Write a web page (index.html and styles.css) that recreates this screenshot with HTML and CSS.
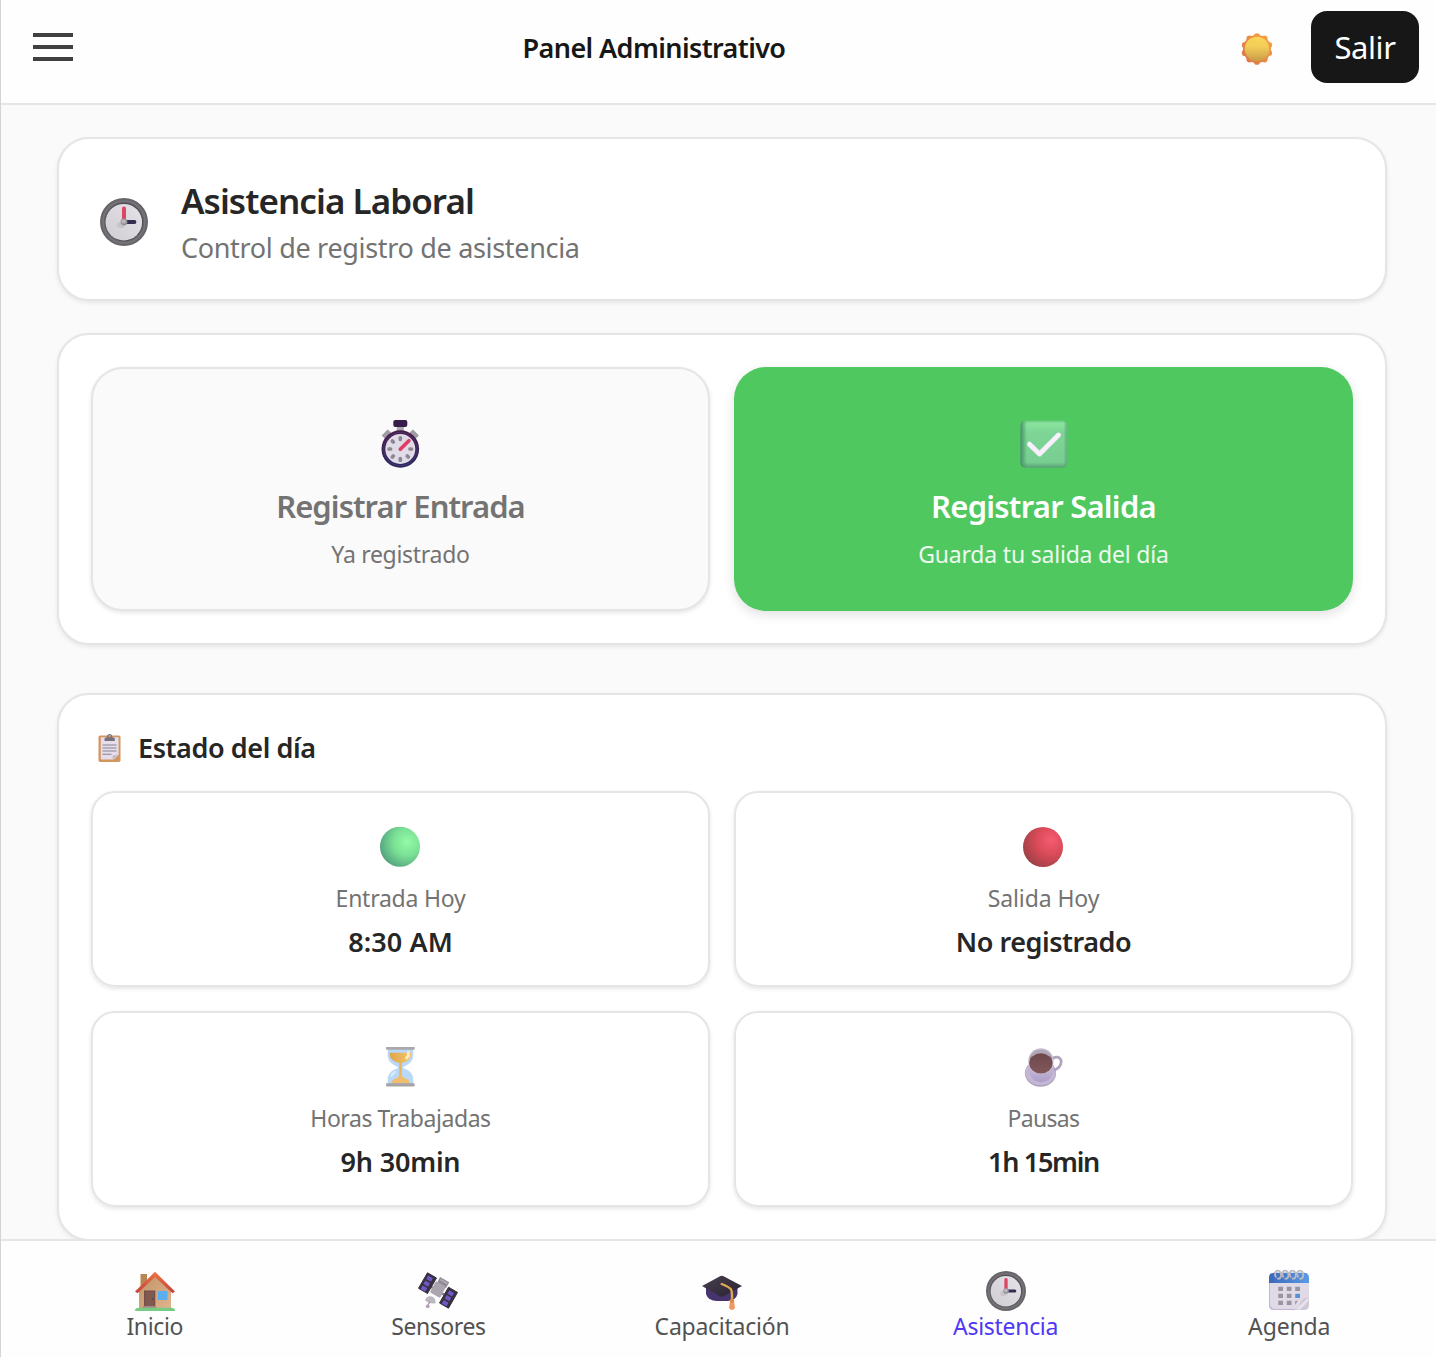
FILE: index.html
```html
<!DOCTYPE html>
<html lang="es">
<head>
<meta charset="utf-8">
<title>Panel Administrativo</title>
<link rel="stylesheet" href="styles.css">
</head>
<body>
<svg width="0" height="0" class="defs" aria-hidden="true">
  <defs>
    <linearGradient id="sunCore" x1="0" y1="0" x2="0" y2="1"><stop offset="0" stop-color="#f9d65a"/><stop offset=".4" stop-color="#f3cd57"/><stop offset="1" stop-color="#c99a48"/></linearGradient>
    <linearGradient id="sunRim" gradientUnits="userSpaceOnUse" x1="28" y1="4" x2="4" y2="28"><stop offset="0" stop-color="#f6a047"/><stop offset="1" stop-color="#db7745"/></linearGradient>
    <linearGradient id="face" x1="0" y1="1" x2="1" y2="0"><stop offset="0" stop-color="#cfccd2"/><stop offset="1" stop-color="#e5e2e8"/></linearGradient>
    <linearGradient id="watch" x1="0" y1="0" x2="0" y2="1"><stop offset="0" stop-color="#4a1a48"/><stop offset="1" stop-color="#272b66"/></linearGradient>
    <radialGradient id="green" cx=".68" cy=".38" r=".75"><stop offset="0" stop-color="#92faa8"/><stop offset=".45" stop-color="#7be295"/><stop offset="1" stop-color="#4f9c7c"/></radialGradient>
    <radialGradient id="red" cx=".7" cy=".33" r=".75"><stop offset="0" stop-color="#f55c70"/><stop offset=".5" stop-color="#d94a58"/><stop offset="1" stop-color="#9f4147"/></radialGradient>
    <linearGradient id="check" x1="0" y1="0" x2="0" y2="1"><stop offset="0" stop-color="#6fcb88"/><stop offset=".06" stop-color="#89e59d"/><stop offset=".25" stop-color="#7dd595"/><stop offset=".88" stop-color="#78ce91"/><stop offset="1" stop-color="#579f75"/></linearGradient>
    <linearGradient id="checkSide" x1="0" y1="0" x2="1" y2="0"><stop offset="0" stop-color="#438f62"/><stop offset=".14" stop-color="#438f62" stop-opacity="0"/><stop offset=".92" stop-color="#509b6b" stop-opacity="0"/><stop offset="1" stop-color="#509b6b" stop-opacity=".7"/></linearGradient>
    <linearGradient id="sand" x1="0" y1="0" x2="1" y2="0"><stop offset="0" stop-color="#dda64c"/><stop offset="1" stop-color="#f6c66a"/></linearGradient>
    <linearGradient id="cup" x1="0" y1="0" x2="0" y2="1"><stop offset="0" stop-color="#c9bfd6"/><stop offset="1" stop-color="#af9dca"/></linearGradient>
    <linearGradient id="coffee" x1="0" y1="0" x2="0" y2="1"><stop offset="0" stop-color="#6c494b"/><stop offset="1" stop-color="#82575a"/></linearGradient>
    <linearGradient id="wall" x1="0" y1="0" x2="1" y2="1"><stop offset="0" stop-color="#c09467"/><stop offset="1" stop-color="#e0b48e"/></linearGradient>
    <linearGradient id="roof" x1="0" y1="0" x2="0" y2="1"><stop offset="0" stop-color="#ef7445"/><stop offset="1" stop-color="#c5413c"/></linearGradient>
    <linearGradient id="calTop" x1="0" y1="0" x2="1" y2="0"><stop offset="0" stop-color="#3c68b8"/><stop offset="1" stop-color="#5b9be6"/></linearGradient>
    <linearGradient id="capTop" x1="0" y1="0" x2="1" y2="1"><stop offset="0" stop-color="#484050"/><stop offset="1" stop-color="#29222f"/></linearGradient>
    <symbol id="clock" viewBox="0 0 48 48">
      <circle cx="24" cy="24" r="24" fill="#67656a"/>
      <circle cx="24" cy="24" r="21" fill="none" stroke="#77757a" stroke-width="1.5"/>
      <circle cx="24" cy="24" r="19.2" fill="#504d54"/>
      <circle cx="23.8" cy="24.2" r="18.3" fill="url(#face)"/>
      <ellipse cx="21" cy="27" rx="4" ry="3" fill="#aaa7ae" opacity=".35"/>
      <path d="M24 10.500V23" stroke="#dc4765" stroke-width="4" stroke-linecap="round"/>
      <path d="M26 24h8.500" stroke="#332d52" stroke-width="3.800" stroke-linecap="round"/>
      <circle cx="24" cy="24" r="3.400" fill="#97949b"/><circle cx="23.700" cy="23.500" r="2.100" fill="#bbb8be"/>
    </symbol>
  </defs>
</svg>

<div class="app">
  <header class="topbar">
    <button class="menu" aria-label="Menú"><span></span><span></span><span></span></button>
    <h1 class="topbar-title"><span class="t-panel">Panel Administrativo</span></h1>
    <svg class="sun" viewBox="0 0 32 32">
      <g fill="url(#sunRim)"><circle cx="16" cy="16" r="14"/><circle cx="16" cy="3.300" r="3.100"/><circle cx="23.500" cy="5.700" r="3.100"/><circle cx="28.100" cy="12.100" r="3.100"/><circle cx="28.100" cy="19.900" r="3.100"/><circle cx="23.500" cy="26.300" r="3.100"/><circle cx="16" cy="28.700" r="3.100"/><circle cx="8.500" cy="26.300" r="3.100"/><circle cx="3.900" cy="19.900" r="3.100"/><circle cx="3.900" cy="12.100" r="3.100"/><circle cx="8.500" cy="5.700" r="3.100"/></g>
      <circle cx="16" cy="16" r="12.200" fill="url(#sunCore)"/>
    </svg>
    <button class="logout"><span class="t-salir">Salir</span></button>
  </header>

  <main class="content">
    <section class="card intro">
      <svg class="icon-lg"><use href="#clock"/></svg>
      <div class="intro-text">
        <h2><span class="t-intro">Asistencia Laboral</span></h2>
        <p><span class="t-sub">Control de registro de asistencia</span></p>
      </div>
    </section>

    <section class="card actions">
      <button class="action action-done">
        <svg class="icon-lg" viewBox="0.700 0 48 48">
          <path d="M7.500 16.500l6-6M40.500 16.500l-6-6" stroke="#9b989e" stroke-width="6" transform="translate(0 1)"/>
          <path d="M6.300 16l5.500-5.500 4 4-5.500 5.500zM41.700 16l-5.500-5.500-4 4 5.500 5.500z" fill="#a09da3"/>
          <path d="M20.500 5h7v7h-7z" fill="#aaa8ad"/>
          <rect x="17" y="0" width="14" height="7" rx="2" fill="#371d49"/>
          <circle cx="24" cy="29" r="18.800" fill="url(#watch)"/>
          <circle cx="24" cy="29" r="16.600" fill="none" stroke="#4d3568" stroke-width="1"/>
          <circle cx="24" cy="29" r="15" fill="#e1dbe7"/>
          <g stroke="#8c8790" stroke-width="3.700" stroke-linecap="round"><path d="M24 17.800v1.500M24 38.700v1.500M12.800 29h1.500M33.700 29h1.500M16 21l1 1M31 36l1 1M16 37l1-1"/></g>
          <path d="M24 29.300l8.600-8.600" stroke="#dc3e66" stroke-width="3.600" stroke-linecap="round"/>
        </svg>
        <span class="action-title"><span class="t-entrada">Registrar Entrada</span></span>
        <span class="action-note"><span class="t-ya">Ya registrado</span></span>
      </button>
      <button class="action action-ready">
        <svg class="icon-lg" viewBox="0 0 48 48">
          <rect x=".3" y=".8" width="47" height="47" rx="5" fill="url(#check)"/>
          <rect x=".3" y=".8" width="47" height="47" rx="5" fill="url(#checkSide)"/>
          <path d="M9.500 24.200l10 9.700L38.500 15" fill="none" stroke="#f8effc" stroke-width="4.900" stroke-linecap="round" stroke-linejoin="round"/>
        </svg>
        <span class="action-title"><span class="t-salida">Registrar Salida</span></span>
        <span class="action-note"><span class="t-guarda">Guarda tu salida del día</span></span>
      </button>
    </section>

    <section class="card status">
      <h3 class="status-head">
        <svg class="clip" viewBox="0 0 24 28">
          <rect x="1" y="1.500" width="22" height="26.500" rx="1.700" fill="#d2965f"/>
          <path d="M3.300 3.300h17.800v17.200l-5 5H3.300z" fill="#e5ddec"/>
          <path d="M15.200 25.600v-3.800q4.600-.5 6-2.700z" fill="#bdb3c5"/>
          <path d="M7 7V4.800q0-1.600 2-1.600h6.300q2 0 2 1.600V7z" fill="#77717a"/>
          <circle cx="12.100" cy="2.600" r="1.900" fill="none" stroke="#77717a" stroke-width="1.300"/>
          <path d="M5 11h14M5 14h14M5 17h14M5 20.200h9" stroke="#8a8390" stroke-width="1.100"/>
        </svg>
        <span class="t-estado">Estado del día</span>
      </h3>
      <div class="stats">
        <div class="stat">
          <svg class="icon-md" viewBox="0 0 40 40"><circle cx="20" cy="19.700" r="20" fill="url(#green)"/></svg>
          <span class="stat-label"><span class="t-ehoy">Entrada Hoy</span></span>
          <span class="stat-value"><span class="t-830">8:30 AM</span></span>
        </div>
        <div class="stat">
          <svg class="icon-md" viewBox="0 0 40 40"><circle cx="20" cy="20" r="20" fill="url(#red)"/></svg>
          <span class="stat-label"><span class="t-shoy">Salida Hoy</span></span>
          <span class="stat-value"><span class="t-no">No registrado</span></span>
        </div>
        <div class="stat">
          <svg class="icon-md" viewBox="0 0.500 40 40">
            <path d="M7.700 2v6c0 7 4 9.500 10 12.500v1.500c-6 1-10 6-10 11v5h25.600v-5c0-5-4-10-10-11v-1.500c6-3 10-5.500 10-12.500V2z" fill="#b9d8fa"/>
            <path d="M9.500 6.200h22c0 6-3 8.300-9.700 10.300V30h-2.600V16.500C12.500 14.500 9.500 12.200 9.500 6.200z" fill="url(#sand)"/>
            <path d="M11 37q1-4.500 6-5.200l2-2.800h3l2 2.800q5.500.7 6 5.200z" fill="#efbd6d"/>
            <path d="M28.300 6v3.500l-1.700 2" fill="none" stroke="#fdecc4" stroke-width="2.800" stroke-linecap="round"/>
            <path d="M11.500 29l3.500-3.500" stroke="#dceeff" stroke-width="2" stroke-linecap="round"/>
            <rect x="6" y="0" width="28.700" height="3.200" rx="1" fill="#aaa8aa"/><rect x="6" y="36.800" width="28.700" height="3.200" rx="1" fill="#a5a3a6"/>
          </svg>
          <span class="stat-label"><span class="t-horas">Horas Trabajadas</span></span>
          <span class="stat-value"><span class="t-9h">9h 30min</span></span>
        </div>
        <div class="stat">
          <svg class="icon-md" viewBox="0 0 40 40">
            <ellipse cx="17.500" cy="26.200" rx="15.600" ry="13.500" fill="#aca0bd"/>
            <ellipse cx="17.500" cy="25.400" rx="15.200" ry="12.700" fill="#c3b7d4"/>
            <path d="M29 12c3-3 8-2.500 9 1.500 1 5-3.500 9.500-8.500 9.500" fill="none" stroke="#b0a5be" stroke-width="2.800"/>
            <path d="M5.300 18c0 10 4 17.200 12.700 17.200S31 28 31 18z" fill="url(#cup)"/>
            <ellipse cx="17.900" cy="14" rx="12.700" ry="12.700" fill="#c8c0d1"/>
            <ellipse cx="17.900" cy="14.500" rx="11.300" ry="11.500" fill="#8e7780"/>
            <path d="M7.200 9q3-6.500 10.700-6.500T28.600 9l-2 1q-8-4-17.400 0z" fill="#b1a6b6"/>
            <ellipse cx="17.900" cy="16.300" rx="11.600" ry="10.100" fill="url(#coffee)"/>
          </svg>
          <span class="stat-label"><span class="t-pausas">Pausas</span></span>
          <span class="stat-value"><span class="t-1h">1h 15min</span></span>
        </div>
      </div>
    </section>
  </main>

  <nav class="tabs">
    <a class="tab">
      <svg class="icon-md" viewBox="0 0 40 40">
        <path d="M5.500 3h6.500v14H5.500z" fill="#b48754"/>
        <path d="M4 19L20 4l16 15v19H4z" fill="url(#wall)"/>
        <path d="M0 20.500L20 .8l20 19.700-2.500 1.700L20 6 2.500 22.200z" fill="url(#roof)"/>
        <rect x="9" y="19.500" width="11.300" height="16.500" fill="#765048"/><rect x="10.500" y="21" width="8.500" height="14" fill="#805951"/><circle cx="17.500" cy="28" r=".8" fill="#4b3330"/>
        <rect x="23" y="20" width="9.500" height="9" fill="#5baff0"/>
        <rect x="8" y="35" width="13" height="2.500" fill="#a28b8a"/>
        <path d="M0 40q0-3.200 4-3.200h32q4 0 4 3.200z" fill="#76cc83"/>
      </svg>
      <span class="t-inicio">Inicio</span>
    </a>
    <a class="tab">
      <svg class="icon-md" viewBox="0 0 40 40">
        <path d="M10 14l20 12" stroke="#817d86" stroke-width="2.500"/>
        <g fill="#37313f" stroke="#37313f" stroke-linejoin="round"><path d="M9.500 1.800L18.500 7 9.500 22.500.5 17.300zM30.500 16.200l9 5.200-9 15.800-9-5.200z"/></g>
        <g fill="#6f57c6"><path d="M10.200 4.600l4.700 2.700-2 3.500-4.700-2.700zM7.400 9.500l4.700 2.700-2 3.500L5.400 13zM4.600 14.400l4.700 2.700-2 3.500-4.700-2.700zM31.400 19.200l4.700 2.700-2 3.500-4.700-2.700zM28.600 24.100l4.700 2.700-2 3.500-4.700-2.700zM25.800 29l4.700 2.700-2 3.500-4.700-2.700z"/></g>
        <path d="M22 6l9.200 5.300-3.300 5.900-9-4.700z" fill="#8f8a94"/><path d="M22.300 8.500l7 4" stroke="#b1acb6" stroke-width="1.500"/>
        <path d="M17.300 11.300q.8-1.200 2-.5l7.500 4.400q1.200.7.500 2l-4.600 8.600q-.8 1.200-2 .5L13 22q-1.200-.8-.5-2z" fill="#aaa5af"/>
        <path d="M7 29.500q1.500-5 6-4.200 5 1 4.500 7-6 1-10.500-2.800z" fill="#bdb8c2"/>
        <path d="M12 30.500l-2.200 4" stroke="#98929e" stroke-width="1.300"/><circle cx="9.700" cy="35.300" r="1.900" fill="#b99fba"/>
      </svg>
      <span class="t-sensores">Sensores</span>
    </a>
    <a class="tab">
      <svg class="icon-md" viewBox="0 0 40 40">
        <path d="M4 14v9q2 7 11 7h11q8-.7 9.500-7v-9z" fill="#46346f"/>
        <path d="M0 15L18.500 5q1.300-.6 2.600 0L40 15 21.100 25.400q-1.300.6-2.600 0z" fill="url(#capTop)"/>
        <path d="M19.700 13q8 3 9.500 5.700 1 2 .8 12" fill="none" stroke="#dea94d" stroke-width="2.400" stroke-linecap="round"/>
        <path d="M28.200 29h3.600l1.200 8q-3 4-6 0z" fill="#f09861"/><circle cx="30" cy="29.800" r="2.200" fill="#db894c"/>
      </svg>
      <span class="t-capa">Capacitación</span>
    </a>
    <a class="tab tab-active">
      <svg class="icon-md"><use href="#clock"/></svg>
      <span class="t-asis">Asistencia</span>
    </a>
    <a class="tab">
      <svg class="icon-md calendar" viewBox="0 0 40 40">
        <path d="M0 10h40v22l-7 7H5q-5 0-5-5z" fill="#e0dae6"/>
        <path d="M0 34q0 5 5 5h21v-1H6q-4.500 0-5-5V12H0z" fill="#c2b7d1"/>
        <path d="M0 12V6.700q0-5 5-5h30q5 0 5 5V12z" fill="url(#calTop)"/>
        <path d="M26 39l1.500-2q3-1 3.500-5 2-5 9-6v8q0 5-5 5z" fill="#cfc8d6"/><path d="M27 38.500L39.500 26v4L31 38.500z" fill="#e8e2ec"/>
        <path d="M9.300 15.800H14V20H9.300zM17.800 15.800h4.700V20h-4.700zM26.200 15.800H31V20h-4.800zM9.300 22.800H14V27H9.300zM17.800 22.800h4.700V27h-4.700zM9.300 29.800H14V34H9.300zM17.800 29.800h4.700V34h-4.700zM26.200 29.800h2.500L26.200 34z" fill="#9994a1"/>
        <path d="M26.200 22.800H31V27h-4.800z" fill="#5990d8"/>
        <g fill="none" stroke="#bdb9c1" stroke-width="1.800" stroke-linecap="round"><path id="ring" d="M6.800 5.800C5 2.500 6.300-.3 8.600-.3c2.600 0 4 3 3.300 5.500-.5 2-1.700 2.700-3 2.500"/><use href="#ring" x="7.400"/><use href="#ring" x="14.800"/><use href="#ring" x="22.200"/></g>
      </svg>
      <span class="t-agenda">Agenda</span>
    </a>
  </nav>
</div>
</body>
</html>
```
FILE: styles.css
```css
* { box-sizing: border-box; }
body { margin: 0; background: #fafafa; color: #262626; font-family: "Noto Sans", "Open Sans", sans-serif; }
h1, h2, h3, p { margin: 0; font-weight: 600; }
button { font: inherit; color: inherit; border: 0; background: none; padding: 0; }
.defs { position: absolute; }
svg { display: block; flex: none; }
span { white-space: nowrap; }

.app { display: flex; flex-direction: column; height: 1357px; border-left: 1px solid #d4d4d4; overflow: hidden; }

.topbar { display: flex; align-items: center; flex: none; height: 105px; padding: 0 17px 9px 32px; background: #fefefe; border-bottom: 2px solid #e5e5e5; }
.menu { display: flex; flex-direction: column; gap: 8px; width: 40px; }
.menu span { height: 4px; background: #404040; }
.topbar-title { flex: 1; padding-right: 6px; text-align: center; font-size: 27px; line-height: 40px; color: #171717; padding-top: 2px; }
.sun { width: 32px; height: 32px; margin: 4px 38px 0 0; }
.logout { width: 108px; height: 72px; border-radius: 16px; background: #171717; color: #fff; font-size: 31px; line-height: 72px; }

.content { flex: 1; min-height: 0; overflow: hidden; padding: 32px 49px 0 56px; }
.card { background: #fff; border: 2px solid #e5e5e5; border-radius: 32px; box-shadow: 0 2px 4px rgba(0, 0, 0, .08); }
.icon-lg { width: 48px; height: 48px; }
.icon-md { width: 40px; height: 40px; }
.calendar { overflow: visible; }

.intro { display: flex; height: 164px; padding: 37px 41px; gap: 33px; }
.intro .icon-lg { margin-top: 22px; }
.intro-text { padding-top: 1px; }
.intro-text h2 { font-size: 35px; line-height: 48px; }
.intro-text p { margin-top: 1px; font-size: 27px; line-height: 44px; font-weight: 400; color: #737373; }

.actions { display: grid; grid-template-columns: 1fr 1fr; gap: 24px; height: 312px; margin-top: 32px; padding: 32px; }
.action { display: flex; flex-direction: column; align-items: center; padding-top: 53px; border-radius: 32px; }
.action-done { padding-top: 51px; border: 2px solid #e5e5e5; background: #fafafa; color: #737373; box-shadow: 0 2px 4px rgba(0, 0, 0, .1); }
.action-ready { background: #50c860; color: #fff; box-shadow: 0 4px 12px rgba(0, 0, 0, .12); }
.action-title { margin-top: 16px; font-size: 31px; line-height: 44px; font-weight: 600; }
.action-note { margin-top: 8px; font-size: 23px; line-height: 36px; }
.action-ready .action-note { color: #edf9ef; }

.status { margin-top: 48px; padding: 32px; height: 548px; }
.status-head { display: flex; align-items: center; gap: 16px; height: 42px; padding-left: 6px; font-size: 27px; line-height: 42px; }
.clip { width: 25px; height: 28px; }
.stats { display: grid; grid-template-columns: 1fr 1fr; gap: 24px; margin-top: 22px; }
.stat { display: flex; flex-direction: column; align-items: center; height: 196px; padding-top: 34px; border: 2px solid #e5e5e5; border-radius: 24px; box-shadow: 0 2px 4px rgba(0, 0, 0, .1); }
.stat .icon-md { margin-right: 1px; }
.stat-label { margin-top: 13px; font-size: 23px; line-height: 36px; color: #737373; }
.stat-value { margin-top: 6px; font-size: 27px; line-height: 40px; font-weight: 600; }

.tabs { display: grid; grid-template-columns: repeat(5, 1fr); flex: none; height: 118px; padding: 30px 5px 0 12px; background: #fefefe; border-top: 2px solid #e5e5e5; }
.tab { display: flex; flex-direction: column; align-items: center; font-size: 23px; line-height: 30px; color: #525252; }
.tab-active { color: #4f39f6; }

/* Tracking per label */
.t-panel { letter-spacing: -.6px; }
.t-salir { letter-spacing: -.4px; }
.t-intro { letter-spacing: -.95px; }
.t-sub { letter-spacing: -.32px; }
.t-entrada { letter-spacing: -.95px; }
.t-salida { letter-spacing: -.75px; }
.t-ya { letter-spacing: -.3px; }
.t-guarda { letter-spacing: -.2px; }
.t-estado { letter-spacing: -.42px; }
.t-ehoy { letter-spacing: -.25px; }
.t-830 { letter-spacing: .1px; }
.t-shoy { letter-spacing: -.1px; }
.t-no { letter-spacing: -.46px; }
.t-horas { letter-spacing: -.44px; }
.t-9h { letter-spacing: -.2px; }
.t-pausas { letter-spacing: -.7px; }
.t-1h { letter-spacing: -1.3px; }
.t-inicio { letter-spacing: -.35px; }
.t-sensores { letter-spacing: -.45px; }
.t-capa { letter-spacing: -.25px; }
.t-asis { letter-spacing: -.3px; }
.t-agenda { letter-spacing: -.15px; }
```
